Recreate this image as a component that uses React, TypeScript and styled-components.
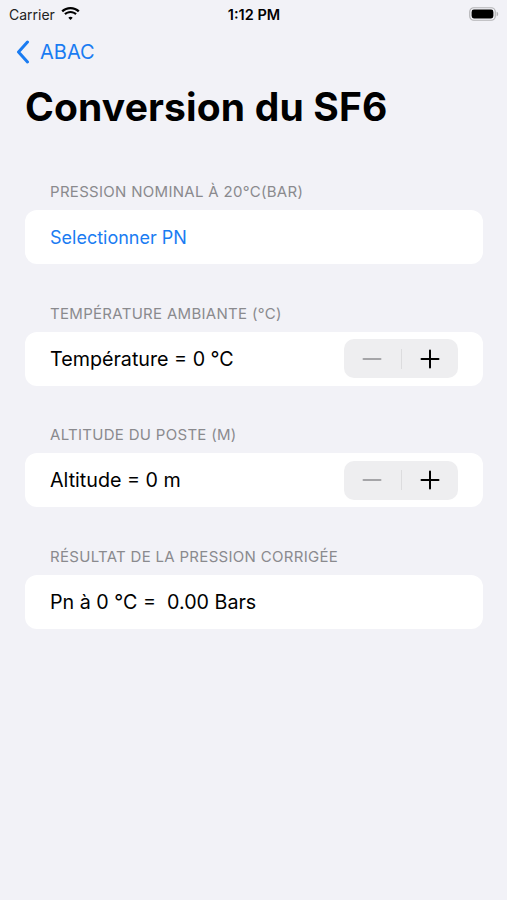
import React from "react";
import styled, { createGlobalStyle } from "styled-components";

const Global = createGlobalStyle`
  html, body { margin: 0; padding: 0; background: #f2f2f7; }
  body { font-family: Inter, "Liberation Sans", sans-serif; -webkit-font-smoothing: antialiased; }
`;

const Screen = styled.div`
  width: 507px;
  min-height: 900px;
  background: #f2f2f7;
  display: flex;
  flex-direction: column;
`;

const StatusBar = styled.div`
  height: 28px;
  display: grid;
  grid-template-columns: 1fr auto 1fr;
  align-items: center;
  padding: 0 8px 0 9px;
  color: #000;
`;

const Carrier = styled.div`
  display: flex;
  align-items: center;
  gap: 6px;
  font-size: 14px;
  color: #222;
`;

const Time = styled.div`
  font-size: 14.5px;
  font-weight: 600;
  text-align: center;
`;

const BatteryWrap = styled.div`
  justify-self: end;
  display: flex;
  align-items: center;
`;

const NavBar = styled.div`
  height: 48px;
  display: flex;
  align-items: center;
  padding-left: 16px;
  gap: 10px;
  color: #1a7cf2;
  font-size: 20px;
`;

const Title = styled.h1`
  margin: 7px 0 0 25px;
  font-size: 39px;
  font-weight: 700;
  letter-spacing: 0.15px;
  color: #000;
`;

const Sections = styled.div`
  display: flex;
  flex-direction: column;
  padding: 52px 24px 0 25px;
  gap: 39.5px;
`;

const Section = styled.section`
  display: flex;
  flex-direction: column;
`;

const Header = styled.div`
  font-size: 15px;
  color: #8a8a8e;
  padding-left: 25px;
  line-height: 20px;
  margin-bottom: 8px;
  letter-spacing: 0.3px;
`;

const Card = styled.div`
  background: #fff;
  border-radius: 12px;
  height: 54px;
  display: flex;
  align-items: center;
  justify-content: space-between;
  padding: 0 25px;
`;

const Label = styled.span<{ $link?: boolean }>`
  color: ${(p) => (p.$link ? "#1a7cf2" : "#000")};
  font-size: ${(p) => (p.$link ? "18px" : "19.7px")};
  white-space: pre;
`;

const Stepper = styled.div`
  width: 114px;
  height: 39px;
  background: #eeeef0;
  border-radius: 10px;
  display: flex;
  align-items: center;
`;

const StepBtn = styled.div<{ $dim?: boolean }>`
  flex: 1;
  display: flex;
  align-items: center;
  justify-content: center;
  color: ${(p) => (p.$dim ? "#a5a5a8" : "#000")};
`;

const Divider = styled.div`
  width: 1px;
  height: 20px;
  background: #dcdcde;
`;

const Wifi = () => (
  <svg width="19" height="14" viewBox="0 0 19 14">
    <path d="M9.5 2.2c2.9 0 5.5 1.1 7.5 3l1.6-1.7C16.2 1.2 13 0 9.5 0S2.8 1.2.4 3.5L2 5.2c2-1.9 4.6-3 7.5-3z" fill="#000" />
    <path d="M9.5 6.1c1.8 0 3.4.7 4.7 1.8l1.6-1.6C14.1 4.8 11.9 3.9 9.5 3.9S4.9 4.8 3.2 6.3l1.6 1.6c1.3-1.1 2.9-1.8 4.7-1.8z" fill="#000" />
    <path d="M9.5 9.8c.8 0 1.6.3 2.2.9L9.5 13 7.3 10.7c.6-.6 1.4-.9 2.2-.9z" fill="#000" />
  </svg>
);

const Battery = () => (
  <svg width="30" height="14" viewBox="0 0 30 14">
    <rect x="0.75" y="0.75" width="25.5" height="12.5" rx="4" fill="none" stroke="#b4b4b6" strokeWidth="1.2" />
    <rect x="2.6" y="2.6" width="21.8" height="8.8" rx="2.3" fill="#000" />
    <path d="M27.6 4.8c1 .3 1.6 1.1 1.6 2.2s-.6 1.9-1.6 2.2z" fill="#b4b4b6" />
  </svg>
);

const Chevron = () => (
  <svg width="14" height="24" viewBox="0 0 14 24">
    <path d="M11.5 2 L2.5 12 L11.5 22" fill="none" stroke="#1a7cf2" strokeWidth="3" strokeLinecap="round" strokeLinejoin="round" />
  </svg>
);

const Minus = () => (
  <svg width="20" height="20" viewBox="0 0 20 20">
    <path d="M1.5 10h17" stroke="currentColor" strokeWidth="2" strokeLinecap="round" />
  </svg>
);

const Plus = () => (
  <svg width="20" height="20" viewBox="0 0 20 20">
    <path d="M1.5 10h17M10 1.5v17" stroke="currentColor" strokeWidth="2" strokeLinecap="round" />
  </svg>
);

const StepperControl = () => (
  <Stepper>
    <StepBtn $dim>
      <Minus />
    </StepBtn>
    <Divider />
    <StepBtn>
      <Plus />
    </StepBtn>
  </Stepper>
);

export default function App() {
  return (
    <Screen>
      <Global />
      <StatusBar>
        <Carrier>
          Carrier <Wifi />
        </Carrier>
        <Time>1:12 PM</Time>
        <BatteryWrap>
          <Battery />
        </BatteryWrap>
      </StatusBar>
      <NavBar>
        <Chevron />
        <span>ABAC</span>
      </NavBar>
      <Title>Conversion du SF6</Title>
      <Sections>
        <Section>
          <Header>PRESSION NOMINAL À 20°C(BAR)</Header>
          <Card>
            <Label $link>Selectionner PN</Label>
          </Card>
        </Section>
        <Section>
          <Header>TEMPÉRATURE AMBIANTE (°C)</Header>
          <Card>
            <Label>Température = 0 °C</Label>
            <StepperControl />
          </Card>
        </Section>
        <Section>
          <Header>ALTITUDE DU POSTE (M)</Header>
          <Card>
            <Label>Altitude = 0 m</Label>
            <StepperControl />
          </Card>
        </Section>
        <Section>
          <Header>RÉSULTAT DE LA PRESSION CORRIGÉE</Header>
          <Card>
            <Label>Pn à 0 °C =  0.00 Bars</Label>
          </Card>
        </Section>
      </Sections>
    </Screen>
  );
}
